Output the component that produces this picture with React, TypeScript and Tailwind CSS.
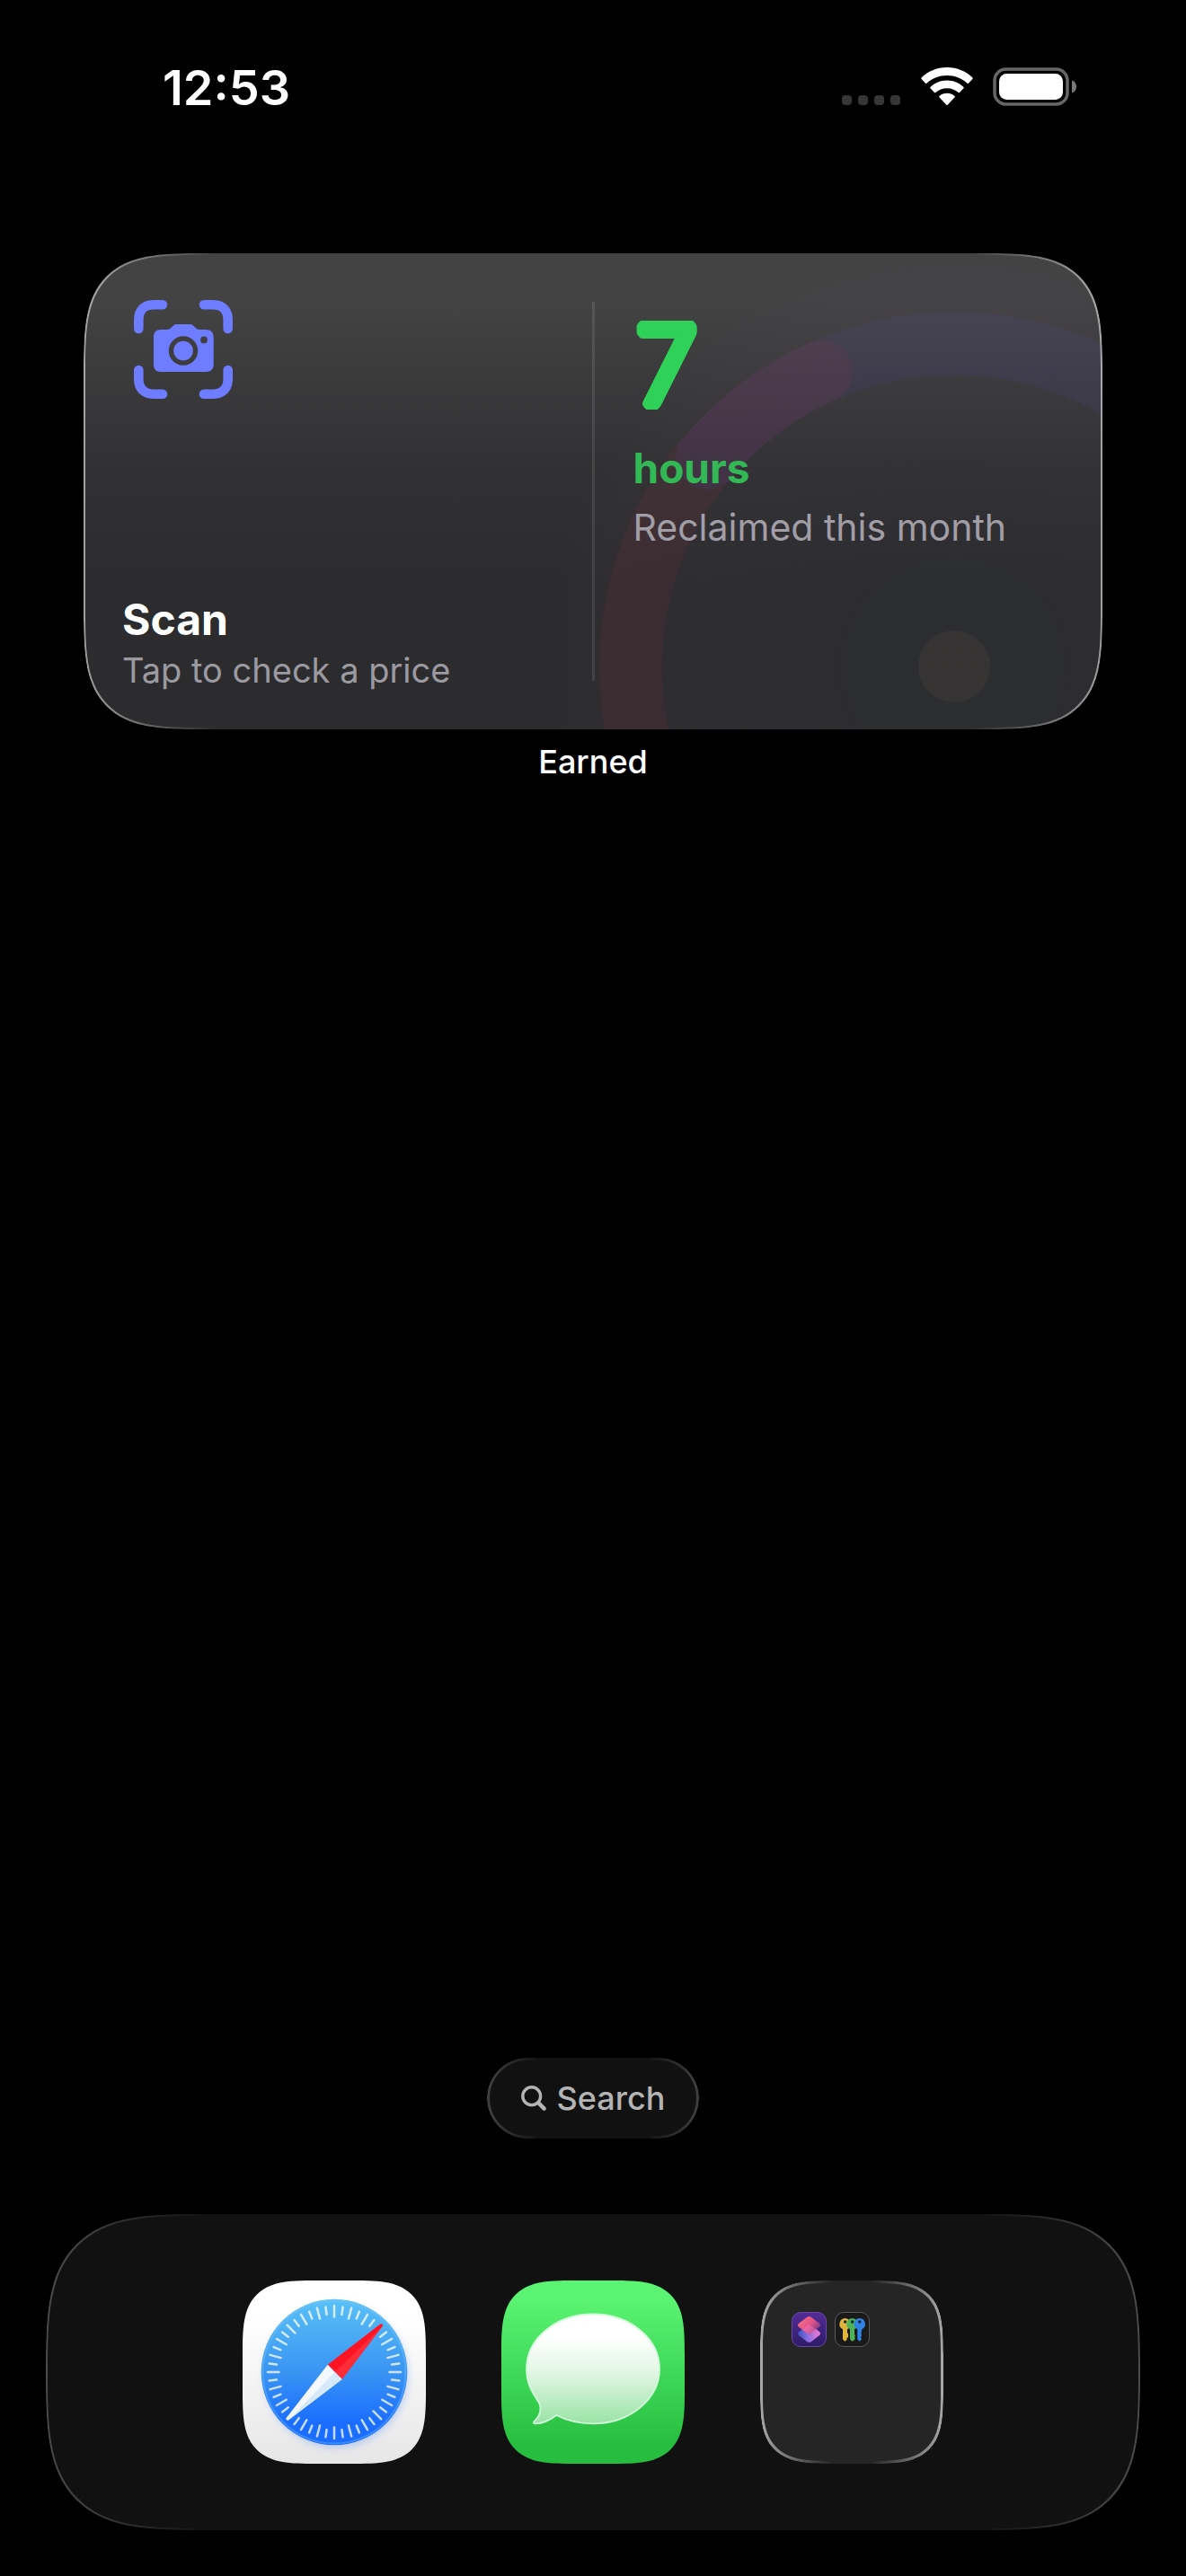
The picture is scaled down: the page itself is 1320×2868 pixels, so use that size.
import type { ReactNode } from "react";

interface AppTileProps {
  children?: ReactNode;
  label: string;
  className?: string;
}

const COMPASS_TICKS = Array.from({ length: 48 }, (_, i) => i).filter(
  (i) => i !== 6 && i !== 30
);

// ring of hard shadows that thickens a light glyph and rounds its ends
const roundedStroke = (radius: number, color: string) =>
  Array.from({ length: 32 }, (_, i) => {
    const angle = (i * Math.PI) / 16;
    return `${(Math.cos(angle) * radius).toFixed(2)}px ${(Math.sin(angle) * radius).toFixed(2)}px 0 ${color}`;
  }).join(", ");

const SignalDots = () => (
  <div className="flex gap-[7px] pb-[1px]">
    {[0, 1, 2, 3].map((dot) => (
      <span key={dot} className="size-[11px] rounded-[4px] bg-[#363636]" />
    ))}
  </div>
);

const WifiIcon = () => (
  <svg className="h-[43px] w-[58px]" viewBox="0 0 58 43" fill="#fff">
    <path d="M29 0C40.500 0 50.500 4.500 57.500 11.500Q58 12.200 57.400 12.900L53 17.700Q52.300 18.300 51.600 17.700C45.500 12 37.500 9 29 9S12.500 12 6.400 17.700Q5.700 18.300 5 17.700L.600 12.900Q0 12.200 .500 11.500C7.500 4.500 17.500 0 29 0Z" />
    <path d="M29 14.500C36 14.500 42.500 17.200 47.500 22Q48.100 22.700 47.500 23.300L43 28Q42.300 28.600 41.600 28C38.200 25 33.800 23.300 29 23.300S19.800 25 16.400 28Q15.700 28.600 15 28L10.500 23.300Q9.900 22.700 10.500 22C15.500 17.200 22 14.500 29 14.500Z" />
    <path d="M29 28.700C32.200 28.700 35.200 29.900 37.600 31.900Q38.300 32.600 37.600 33.300L29.700 41.700Q29 42.400 28.300 41.700L20.400 33.300Q19.700 32.600 20.400 31.900C22.800 29.900 25.800 28.700 29 28.700Z" />
  </svg>
);

const BatteryIcon = () => (
  <svg className="h-[43px] w-[94px]" viewBox="0 0 94 43">
    <rect x="2" y="2" width="81" height="39" rx="12.500" fill="none" stroke="#666" strokeWidth="3.500" />
    <rect x="7" y="7" width="71" height="29" rx="8.500" fill="#fff" />
    <path d="M88 14.500C91 15.500 93 18 93 21.500S91 27.500 88 28.500Z" fill="#7a7a7a" />
  </svg>
);

const ScanIcon = () => (
  <svg className="ml-[13px] size-[110px]" viewBox="0 0 110 110">
    <g fill="none" stroke="#6e7cff" strokeWidth="10.600" strokeLinecap="round">
      <path d="M32 5.300H22C11 5.300 5.300 12 5.300 22V32" />
      <path d="M78 5.300H88C99 5.300 104.700 12 104.700 22V32" />
      <path d="M5.300 78V88C5.300 98 11 104.700 22 104.700H32" />
      <path d="M104.700 78V88C104.700 98 99 104.700 88 104.700H78" />
    </g>
    <path
      fill="#6e7cff"
      fillRule="evenodd"
      d="M30 33H36C39 33 40.500 32 42.500 29.800C44.500 27.500 46 27 48.500 27H61.500C64 27 65.500 27.500 67.500 29.800C69.500 32 71 33 74 33H80C86 33 88.700 36 88.700 41.500V71.500C88.700 77 86 80 80 80H30C24.500 80 22 77 22 71.500V41.500C22 36 24.500 33 30 33ZM55 40.300A16.200 16.200 0 1 0 55 72.700A16.200 16.200 0 1 0 55 40.300ZM78 40.500A3.900 3.900 0 1 0 78 48.300A3.900 3.900 0 1 0 78 40.500Z"
    />
    <circle cx="55" cy="56.500" r="10.800" fill="#6e7cff" />
  </svg>
);

const SearchIcon = () => (
  <svg className="size-[28px]" viewBox="0 0 28 28" fill="none" stroke="#b4b4b4" strokeLinecap="round">
    <circle cx="11.700" cy="11.700" r="9.900" strokeWidth="3.400" />
    <path d="M19.400 19.400L25.600 25.600" strokeWidth="4.400" />
  </svg>
);

const SafariIcon = () => (
  <svg className="size-full" viewBox="0 0 204 204">
    <defs>
      <linearGradient id="safari-plate" x1="0" y1="0" x2="0" y2="1">
        <stop offset="0.200" stopColor="#fff" />
        <stop offset="1" stopColor="#e6e6e7" />
      </linearGradient>
      <linearGradient id="safari-dial" x1="0" y1="0" x2="0" y2="1">
        <stop offset="0" stopColor="#5ac1f6" />
        <stop offset="0.500" stopColor="#3a94f3" />
        <stop offset="0.850" stopColor="#1a6dff" />
      </linearGradient>
      <filter id="safari-glow" x="-20%" y="-20%" width="140%" height="140%">
        <feGaussianBlur stdDeviation="4" />
      </filter>
    </defs>
    <rect width="204" height="204" fill="url(#safari-plate)" />
    <circle cx="104" cy="106" r="80" fill="#1a6dff" opacity="0.250" filter="url(#safari-glow)" />
    <circle cx="102" cy="102" r="81.300" fill="url(#safari-dial)" />
    <circle cx="102" cy="102" r="79.500" fill="none" stroke="#7cc8ff" strokeOpacity="0.350" strokeWidth="2" />
    {COMPASS_TICKS.map((i) => (
      <path
        key={i}
        d={i % 2 ? "M102 29V37.500" : "M102 28V40.500"}
        transform={`rotate(${i * 7.5} 102 102)`}
        stroke="#fff"
        strokeOpacity="0.750"
        strokeWidth="2.500"
        strokeLinecap="round"
      />
    ))}
    <path d="M94.700 93.700L110.700 110L156 50.500Q156.200 47.600 153.300 48.400Z" fill="#ff1424" />
    <path d="M102.500 102L110.700 110L156 50.500Z" fill="#ff3b45" opacity="0.600" />
    <path d="M94.700 93.700L110.700 110L51 155.600Q48 156 48.500 153.200Z" fill="#f4f9ff" />
    <path d="M102.500 102L110.700 110L51 155.600Z" fill="#cfe6fc" opacity="0.800" />
  </svg>
);

const MessagesIcon = () => (
  <svg className="size-full" viewBox="0 0 204 204">
    <defs>
      <linearGradient id="messages-plate" x1="0" y1="0" x2="0" y2="1">
        <stop offset="0.100" stopColor="#5af372" />
        <stop offset="0.900" stopColor="#27be40" />
      </linearGradient>
      <linearGradient id="messages-bubble" x1="0" y1="0" x2="0" y2="1">
        <stop offset="0.200" stopColor="#fff" />
        <stop offset="0.550" stopColor="#e0f6e3" />
        <stop offset="1" stopColor="#9ae3a5" />
      </linearGradient>
    </defs>
    <rect width="204" height="204" fill="url(#messages-plate)" />
    <path
      d="M102 37.500C143 37.500 176 64.500 176 98.300S143 159.300 102 159.300C87 159.300 73 156 61.300 150C54 155.500 45.500 159.300 38 159.300C35.500 159.300 35.300 157.800 37 156.500C42.500 152 45 143.500 42.500 137.500C40 131 28 120 28 98.300C28 64.500 61 37.500 102 37.500Z"
      fill="url(#messages-bubble)"
      stroke="#d3fbdb"
      strokeWidth="1.800"
    />
  </svg>
);

const ShortcutsIcon = () => (
  <svg className="size-[39px]" viewBox="0 0 39 39">
    <defs>
      <linearGradient id="shortcuts-plate" x1="0" y1="0" x2="0" y2="1">
        <stop offset="0" stopColor="#532c97" />
        <stop offset="1" stopColor="#2c1b66" />
      </linearGradient>
      <linearGradient id="shortcuts-top" x1="0.200" y1="0.200" x2="0.900" y2="0.700">
        <stop offset="0" stopColor="#fb6e86" />
        <stop offset="0.500" stopColor="#ee5785" />
        <stop offset="1" stopColor="#8e3d86" />
      </linearGradient>
      <linearGradient id="shortcuts-bottom" x1="0" y1="0.500" x2="1" y2="0.500">
        <stop offset="0" stopColor="#3a4fc0" />
        <stop offset="0.450" stopColor="#8a6ee0" />
        <stop offset="1" stopColor="#f27bd4" />
      </linearGradient>
    </defs>
    <rect x="0.500" y="0.500" width="38" height="38" rx="9.500" fill="url(#shortcuts-plate)" stroke="#6a48a8" />
    <path d="M17 15.300Q19.500 13.700 22 15.300L31 22Q33 24 31 26L22 32.900Q19.500 34.600 17 32.900L8 26Q6 24 8 22Z" fill="url(#shortcuts-bottom)" />
    <path d="M17 5.900Q19.500 4.200 22 5.900L31 12.800Q33 14.800 31 16.800L22 23.600Q19.500 25.300 17 23.600L8 16.800Q6 14.800 8 12.800Z" fill="url(#shortcuts-top)" opacity="0.930" />
    <path d="M19.500 13.900L30 21.500L22 23.600Q19.500 25.300 17 23.600L12 19.800Z" fill="#f073b8" opacity="0.450" />
  </svg>
);

const PasswordsIcon = () => (
  <svg className="size-[39px]" viewBox="0 0 39 39">
    <rect x="0.500" y="0.500" width="38" height="38" rx="9.500" fill="#1a1a1a" stroke="#5a5a5a" />
    <path d="M11.500 7A6.500 6.500 0 0 0 9 19.300V30.500L11.500 32.800L13.500 31V29L15 28.300V24L14 23.500V19.300A6.500 6.500 0 0 0 11.500 7Z" fill="#e0b53c" />
    <path d="M19.500 7A6.500 6.500 0 0 0 17 19.300V30.500L19.500 32.800L22 31L23 29.500L22 28L23 26.500L22 25V19.300A6.500 6.500 0 0 0 19.500 7Z" fill="#4cb356" />
    <path d="M27.800 7A6.500 6.500 0 0 0 25.300 19.300V30.500L27.600 32.800L30 30.500L29 28.500L30 26L29.500 24L30.300 19.300A6.500 6.500 0 0 0 27.800 7Z" fill="#2f83e4" />
    <g fill="#1c2430">
      <circle cx="11.700" cy="11" r="1.700" />
      <circle cx="19.700" cy="11" r="1.700" />
      <circle cx="27.800" cy="11" r="1.700" />
    </g>
  </svg>
);

const WidgetRings = () => (
  <svg
    className="pointer-events-none absolute right-0 bottom-0 h-[530px] w-[600px]"
    viewBox="0 0 600 530"
    fill="none"
  >
    <defs>
      <radialGradient id="ring-haze">
        <stop offset="0.200" stopColor="#5e5ce6" stopOpacity="0.010" />
        <stop offset="0.850" stopColor="#a24c7c" stopOpacity="0.025" />
        <stop offset="1" stopColor="#5e5ce6" stopOpacity="0" />
      </radialGradient>
    </defs>
    <circle cx="435" cy="460" r="460" fill="url(#ring-haze)" />
    <circle cx="435" cy="460" r="122" fill="#30d158" fillOpacity="0.010" />
    <path d="M160 228A360 360 0 0 1 795 460" stroke="#5e4ce6" strokeOpacity="0.085" strokeWidth="70" strokeLinecap="round" />
    <path d="M287 131.800A360 360 0 0 0 100 592" stroke="#ff2d55" strokeOpacity="0.060" strokeWidth="70" strokeLinecap="round" />
    <circle cx="435" cy="460" r="40" fill="#ffb08a" fillOpacity="0.050" />
  </svg>
);

const AppTile = ({ children, label, className = "" }: AppTileProps) => (
  <button
    type="button"
    aria-label={label}
    className={`relative size-[204px] overflow-hidden rounded-[54px] supports-[corner-shape:squircle]:rounded-[82px] [corner-shape:superellipse(1.7)] ${className}`}
  >
    {children}
  </button>
);

const EarnedWidget = () => (
  <section className="relative flex min-h-[530px] overflow-hidden rounded-[87px] bg-linear-to-b from-[#434344] from-10% via-[#313133] via-45% to-[#2c2c2e] to-70% supports-[corner-shape:squircle]:rounded-[133px] [corner-shape:superellipse(1.7)]">
    <WidgetRings />
    <button type="button" className="flex flex-1 flex-col justify-between pt-[52px] pb-[40px] pl-[43px] text-left">
      <ScanIcon />
      <span className="block">
        <span className="block text-[48px] leading-[60px] font-bold text-white">Scan</span>
        <span className="block text-[38px] leading-[52px] text-[#9c9aa1]">Tap to check a price</span>
      </span>
    </button>
    <div className="my-[54px] w-[3px] bg-white/10" />
    <div className="relative flex-1 pt-[57px] pl-[43px]">
      <p
        className="pl-1 text-[120px] leading-[136px] font-light text-[#30d158]"
        style={{ textShadow: roundedStroke(6, "#30d158") }}
      >
        7
      </p>
      <p className="mt-[16px] text-[46px] leading-[60px] font-bold text-[#32b955]">hours</p>
      <p className="mt-[10px] text-[41px] leading-[52px] text-[#a19ea6]">Reclaimed this month</p>
    </div>
    <div className="pointer-events-none absolute inset-0 rounded-[87px] border-2 border-white/55 supports-[corner-shape:squircle]:rounded-[133px] [corner-shape:superellipse(1.7)] [mask-image:linear-gradient(to_right,black,transparent_145px,transparent_calc(100%-145px),black)]" />
  </section>
);

const Dock = () => (
  <nav className="relative mx-[51px] mt-[84px] mb-[51px] flex justify-center gap-[84px] rounded-[118px] bg-[#111] py-[74px] supports-[corner-shape:squircle]:rounded-[176px] [corner-shape:superellipse(1.7)]">
    <AppTile label="Safari">
      <SafariIcon />
    </AppTile>
    <AppTile label="Messages">
      <MessagesIcon />
    </AppTile>
    <AppTile label="Folder" className="bg-[#252525]">
      <span className="flex h-full gap-[9px] p-[35px]">
        <ShortcutsIcon />
        <PasswordsIcon />
      </span>
      <span className="pointer-events-none absolute inset-0 rounded-[54px] border-[3px] border-white/60 supports-[corner-shape:squircle]:rounded-[82px] [corner-shape:superellipse(1.7)] [mask-image:linear-gradient(to_right,black,transparent_80px,transparent_calc(100%-80px),black)]" />
    </AppTile>
    <div className="pointer-events-none absolute inset-0 rounded-[118px] border-2 border-white/25 supports-[corner-shape:squircle]:rounded-[176px] [corner-shape:superellipse(1.7)] [mask-image:linear-gradient(to_right,black,transparent_180px,transparent_calc(100%-180px),black)]" />
  </nav>
);

export default function App() {
  return (
    <div className="flex min-h-screen flex-col bg-black font-['Inter',sans-serif] text-white">
      <header className="flex items-end justify-between pt-[68px] pr-[121px] pl-[181px]">
        <time className="text-[54px] leading-[60px] font-semibold">12:53</time>
        <div className="flex items-end pb-[10px]">
          <SignalDots />
          <div className="ml-[23px] flex gap-[22px]">
            <WifiIcon />
            <BatteryIcon />
          </div>
        </div>
      </header>

      <main className="mx-[93px] mt-[154px]">
        <EarnedWidget />
        <p className="mt-[14px] text-center text-[36px] leading-[44px] font-medium">Earned</p>
      </main>

      <div className="mt-auto flex justify-center">
        <button
          type="button"
          className="relative flex h-[90px] items-center gap-[12px] rounded-full bg-[#111] px-[38px] text-[36px] leading-[44px] font-medium text-[#b4b4b4]"
        >
          <SearchIcon />
          Search
          <span className="pointer-events-none absolute inset-0 rounded-full border-[3px] border-white/20 [mask-image:linear-gradient(to_right,black,transparent_60px,transparent_calc(100%-60px),black)]" />
        </button>
      </div>

      <Dock />
    </div>
  );
}
